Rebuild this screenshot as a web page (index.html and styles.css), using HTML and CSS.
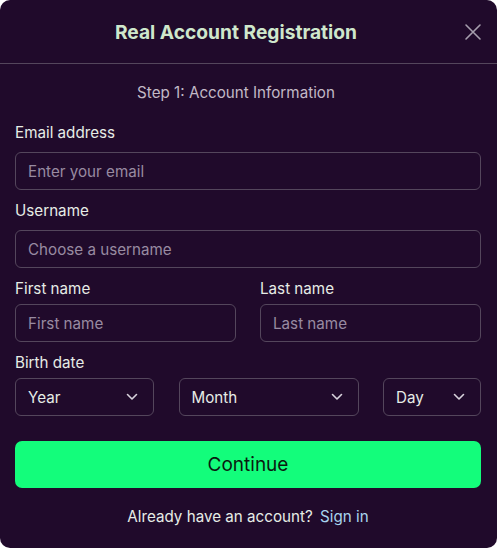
FILE: index.html
```html
<!DOCTYPE html>
<html lang="en">
<head>
    <meta charset="UTF-8">
    <meta name="viewport" content="width=device-width, initial-scale=1.0">
    <title>Real Account Registration</title>
    <link rel="stylesheet" href="styles.css">
</head>
<body>
    <div class="modal">
        <div class="modal-header">
            <h1 class="modal-title">Real Account Registration</h1>
            <button class="close-btn" aria-label="Close">
                <svg width="18" height="18" viewBox="0 0 18 18" fill="none" stroke="currentColor" stroke-width="1.6" stroke-linecap="round">
                    <path d="M2 2L16 16M16 2L2 16"/>
                </svg>
            </button>
        </div>
        <form class="modal-body">
            <p class="step">Step 1: Account Information</p>

            <div class="field">
                <label for="email">Email address</label>
                <input type="email" id="email" placeholder="Enter your email">
            </div>
            <div class="field">
                <label for="username">Username</label>
                <input type="text" id="username" placeholder="Choose a username">
            </div>
            <div class="row">
                <div class="field tight">
                    <label for="first">First name</label>
                    <input type="text" id="first" placeholder="First name">
                </div>
                <div class="field tight">
                    <label for="last">Last name</label>
                    <input type="text" id="last" placeholder="Last name">
                </div>
            </div>
            <div class="field tight">
                <label>Birth date</label>
                <div class="date-row">
                    <div class="select">Year
                        <svg width="12" height="8" viewBox="0 0 12 8" fill="none" stroke="currentColor" stroke-width="1.6" stroke-linecap="round" stroke-linejoin="round"><path d="M1.5 1.5L6 6L10.5 1.5"/></svg>
                    </div>
                    <div class="select">Month
                        <svg width="12" height="8" viewBox="0 0 12 8" fill="none" stroke="currentColor" stroke-width="1.6" stroke-linecap="round" stroke-linejoin="round"><path d="M1.5 1.5L6 6L10.5 1.5"/></svg>
                    </div>
                    <div class="select">Day
                        <svg width="12" height="8" viewBox="0 0 12 8" fill="none" stroke="currentColor" stroke-width="1.6" stroke-linecap="round" stroke-linejoin="round"><path d="M1.5 1.5L6 6L10.5 1.5"/></svg>
                    </div>
                </div>
            </div>

            <button type="button" class="continue">Continue</button>
            <p class="signin">Already have an account? <a href="#">Sign in</a></p>
        </form>
    </div>
</body>
</html>
```

FILE: styles.css
```css
body {
    margin: 0;
    padding: 0;
    background-color: #ffffff;
    font-family: Inter, "Noto Sans", sans-serif;
}
.modal {
    width: 497px;
    height: 548px;
    box-sizing: border-box;
    background-color: #200a2b;
    border-radius: 10px;
    color: #e6ece6;
}
.modal-header {
    height: 63px;
    border-bottom: 1px solid #54465c;
    display: flex;
    align-items: center;
    gap: 7px;
    padding: 0 15px;
}
.modal-title {
    flex: 1;
    margin: 0;
    text-align: center;
    font-size: 19.2px;
    font-weight: 700;
    color: #cfe7cc;
}
.close-btn {
    background: none;
    border: none;
    padding: 0;
    margin-top: 1px;
    display: flex;
    color: #a69ead;
    cursor: pointer;
}
.modal-body {
    padding: 19px 16px 0 15px;
}
.step {
    margin: 0 0 20px;
    padding-right: 24px;
    text-align: center;
    font-size: 15.2px;
    line-height: 20px;
    color: #c2b9c6;
}
.field {
    margin-bottom: 11px;
}
.field label {
    display: block;
    font-size: 15.2px;
    line-height: 20px;
    margin-bottom: 9px;
    color: #e6ece6;
}
.field.tight label {
    margin-bottom: 5px;
}
.field input {
    width: 100%;
    height: 38px;
    box-sizing: border-box;
    background: transparent;
    border: 1px solid #54465c;
    border-radius: 6px;
    padding: 0 12px;
    font-family: inherit;
    font-size: 15.2px;
    color: #e6ece6;
}
.field input::placeholder {
    color: #988aa1;
}
.row {
    display: grid;
    grid-template-columns: 1fr 1fr;
    gap: 24px;
}
.date-row {
    display: grid;
    grid-template-columns: 139px 180px 98px;
    justify-content: space-between;
}
.select {
    height: 38px;
    box-sizing: border-box;
    border: 1px solid #54465c;
    border-radius: 6px;
    padding: 0 15px 0 12px;
    display: flex;
    align-items: center;
    justify-content: space-between;
    font-size: 15.2px;
    color: #e6ece6;
}
.select svg {
    color: #d8d2dc;
}
.continue {
    display: block;
    width: 100%;
    height: 47px;
    margin-top: 25px;
    border: none;
    border-radius: 7px;
    background-color: #13fd7b;
    color: #0a1a10;
    font-family: inherit;
    font-size: 19px;
    cursor: pointer;
}
.signin {
    margin: 19px 0 0;
    text-align: center;
    font-size: 15.2px;
    line-height: 20px;
    color: #e6ece6;
}
.signin a {
    color: #a8d4ee;
    text-decoration: none;
    margin-left: 3px;
}
```
